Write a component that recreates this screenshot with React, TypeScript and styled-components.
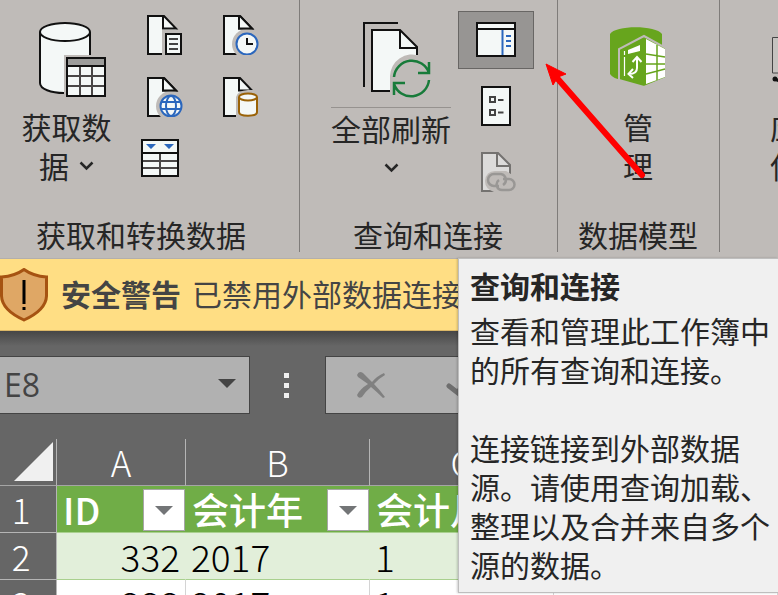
import React from "react";
import styled, { createGlobalStyle } from "styled-components";

const GlobalStyle = createGlobalStyle`
  *, *::before, *::after { box-sizing: border-box; }
  body {
    margin: 0;
    overflow: hidden;
    background: #666666;
    color: #262626;
    font-family: "Open Sans", "Noto Sans CJK SC", sans-serif;
    font-size: 30px;
  }
  button, input { font: inherit; color: inherit; }
  button { border: 0; padding: 0; background: none; cursor: pointer; }
  svg { display: block; flex: none; }
`;

const Page = styled.div`
  position: relative;
  display: flex;
  flex-direction: column;
  height: 100vh;
  overflow: hidden;
`;

/* ---------- Ribbon ---------- */

const Ribbon = styled.header`
  display: flex;
  flex: none;
  overflow: hidden;
  padding-bottom: 6px;
  background: #bfbbb8;
  border-bottom: 1px solid #b3afac;
  font-family: "Noto Sans CJK SC", sans-serif;
  font-weight: 400;
`;

const Group = styled.section<{ $width: number; $inset?: number }>`
  display: flex;
  flex: none;
  flex-direction: column;
  width: ${(p) => p.$width}px;
  padding-left: ${(p) => p.$inset ?? 0}px;
  border-right: 1px solid #7f7c7a;
`;

const GroupBody = styled.div`
  display: flex;
  align-items: flex-start;
  height: 216px;
`;

const GroupLabel = styled.h2<{ $indent: number }>`
  margin: 0;
  padding-left: ${(p) => p.$indent}px;
  font-size: 30px;
  font-weight: inherit;
  line-height: 36px;
  height: 36px;
  white-space: nowrap;
`;

const LargeButton = styled.button<{ $width: number }>`
  display: flex;
  flex: none;
  flex-direction: column;
  align-items: center;
  width: ${(p) => p.$width}px;
  padding-top: 20px;
  line-height: 39px;
`;

const LargeIcon = styled.span`
  display: flex;
  align-items: flex-start;
  height: 87px;
`;

const SplitIcon = styled(LargeIcon)`
  justify-content: center;
  width: 120px;
  height: 88px;
  border-bottom: 1px solid #96928f;
  margin-bottom: 1px;
`;

const Line = styled.span`
  display: flex;
  align-items: center;
  gap: 10px;
  height: 39px;
  white-space: nowrap;
`;

const SmallGrid = styled.div`
  display: grid;
  grid-template-columns: 76px 76px;
  grid-auto-rows: 62px;
  padding-top: 4px;
`;

const SmallStack = styled.div`
  display: flex;
  flex-direction: column;
  gap: 8px;
  padding-top: 11px;
`;

const IconButton = styled.button<{ $active?: boolean }>`
  display: flex;
  align-items: center;
  justify-content: center;
  width: 76px;
  height: 58px;
  background: ${(p) => (p.$active ? "#979593" : "transparent")};
  border: 1px solid ${(p) => (p.$active ? "#686664" : "transparent")};
`;

const GridButton = styled(IconButton)`
  height: 62px;
`;

/* ---------- Message bar ---------- */

const MessageBar = styled.div`
  display: flex;
  flex: none;
  align-items: center;
  height: 72px;
  background: #ffde84;
  border-bottom: 1px solid #dcb867;
  color: #444444;
  white-space: nowrap;
  overflow: hidden;
  line-height: 40px;
`;

const MessageTitle = styled.strong`
  margin-left: 13px;
  font-weight: 700;
`;

const MessageText = styled.span`
  margin-left: 11px;
`;

/* ---------- Formula row ---------- */

const FormulaRow = styled.div`
  display: flex;
  flex: none;
  align-items: center;
  height: 108px;
  background: linear-gradient(#464646, #666666 15px);
`;

const NameBox = styled.div`
  display: flex;
  align-items: center;
  width: 250px;
  height: 58px;
  background: #b1b1b1;
  border: 1px solid #444444;
  border-left: 0;
`;

const NameInput = styled.input`
  flex: 1;
  min-width: 0;
  height: 56px;
  padding: 0 0 2px 4px;
  border: 0;
  outline: 0;
  background: transparent;
  color: #444444;
  font-size: 32px;
`;

const DropButton = styled.button`
  display: flex;
  align-items: center;
  justify-content: center;
  width: 44px;
  height: 54px;
  padding-bottom: 3px;
`;

const Grip = styled.div`
  display: grid;
  justify-content: center;
  gap: 5px;
  width: 75px;
  padding-right: 2px;
`;

const Dot = styled.span`
  width: 5px;
  height: 5px;
  background: #f0f0f0;
`;

const FormulaBox = styled.div`
  display: flex;
  flex: 1;
  align-items: center;
  height: 58px;
  gap: 30px;
  padding-left: 15px;
  background: #b1b1b1;
  border: 1px solid #444444;
`;

const FormulaButton = styled.button`
  display: flex;
  align-items: center;
  justify-content: center;
  width: 60px;
  height: 56px;
`;

/* ---------- Sheet ---------- */

const Sheet = styled.table`
  flex: none;
  width: 100%;
  table-layout: fixed;
  border-collapse: separate;
  border-spacing: 0;
  background: #ffffff;
  color: #000000;
  font-family: "Noto Sans CJK SC", sans-serif;
  font-size: 37px;
  font-weight: 300;
  line-height: 46px;
`;

const Column = styled.col<{ $width?: number }>`
  width: ${(p) => (p.$width ? `${p.$width}px` : "auto")};
`;

const Head = styled.th`
  height: 47px;
  padding: 0;
  background: #666666;
  border-right: 1px solid #b5b5b5;
  border-bottom: 1px solid #a5a5a5;
  color: #ffffff;
  font-size: 35px;
  font-weight: 300;
  line-height: 46px;
`;

const Corner = styled(Head)`
  padding: 0 3px 2px 0;
`;

const CornerButton = styled.button`
  display: block;
  margin-left: auto;
`;

const RowHead = styled(Head)`
  padding: 0 14px 0 0;
  border-bottom-color: #b5b5b5;
`;

const TitleCell = styled.th`
  height: 47px;
  padding: 0 1px 0 6px;
  background: #70ad47;
  border-bottom: 1px solid #a9d08e;
  color: #ffffff;
  font-weight: 500;
  text-align: left;
`;

const TitleContent = styled.div`
  display: flex;
  align-items: center;
  justify-content: space-between;
  height: 46px;
  white-space: nowrap;
`;

const FilterButton = styled.button`
  display: flex;
  align-items: center;
  justify-content: center;
  width: 42px;
  height: 42px;
  margin-top: 2px;
  background: #ffffff;
  border: 1px solid #a6a6a6;
`;

const Cell = styled.td<{ $banded?: boolean; $right?: boolean }>`
  height: 47px;
  padding: 0 5px;
  background: ${(p) => (p.$banded ? "#e2efda" : "#ffffff")};
  border-right: 1px solid ${(p) => (p.$banded ? "#e2efda" : "#d4d4d4")};
  border-bottom: 1px solid #a9d08e;
  text-align: ${(p) => (p.$right ? "right" : "left")};
`;

/* ---------- Overlays ---------- */

const Tooltip = styled.aside`
  position: absolute;
  top: 258px;
  left: 458px;
  right: 0;
  padding: 7px 6px 8px 11px;
  background: #f0f0f0;
  border: 1px solid #bebebe;
  border-right: 0;
  box-shadow: -1px 0 2px rgba(0, 0, 0, 0.2);
  line-height: 39px;
  font-family: "Noto Sans CJK SC", sans-serif;
`;

const TooltipTitle = styled.h3`
  margin: 0 0 6px;
  font-size: 30px;
  font-weight: 700;
  line-height: 39px;
`;

const TooltipText = styled.p`
  margin: 0 0 39px;
  &:last-child { margin: 0; }
`;

const Pointer = styled.svg`
  position: absolute;
  top: 60px;
  left: 540px;
  pointer-events: none;
`;

/* ---------- Icons ---------- */

const INK = "#111111";
const PAPER = "#f4f8f7";
const RIBBON = "#bfbbb8";
const BLUE = "#2b67bd";

const Chevron = () => (
  <svg width="15" height="10" viewBox="0 0 15 10">
    <path d="M1.5 1.5 7.5 7.5 13.5 1.5" fill="none" stroke="#262626" strokeWidth="2.5" />
  </svg>
);

const Triangle = ({ color }: { color: string }) => (
  <svg width="18" height="9" viewBox="0 0 18 9">
    <path d="M0 0H18L9 9Z" fill={color} />
  </svg>
);

const GetDataIcon = () => (
  <svg width="80" height="78" viewBox="-10 0 80 78">
    <path d="M3 12V64C3 70 13 73 28 73H53V12" fill={PAPER} />
    <path d="M3 12V63C3 69 14 73 27 73M53 12V36" fill="none" stroke={INK} strokeWidth="2" />
    <ellipse cx="28" cy="12" rx="25" ry="9" fill={PAPER} stroke={INK} strokeWidth="2" />
    <path d="M27 35H70V78H27Z" fill={RIBBON} />
    <path d="M30 38H68V76H30Z" fill={PAPER} />
    <path d="M30 38H68V45H30Z" fill="#9c9c9a" />
    <path d="M43 46V76M55 46V76M30 56H68M30 66H68" stroke="#4a4747" strokeWidth="2" />
    <path d="M30 46H68M30 38H68V76H30Z" fill="none" stroke={INK} strokeWidth="2" />
  </svg>
);

const PageShape = () => (
  <>
    <path d="M1 1H17L29 14V39H1Z" fill={PAPER} />
    <path d="M15 39H1V1H17L29 13.500H16V1" fill="none" stroke={INK} strokeWidth="2" />
  </>
);

const TextFileIcon = () => (
  <svg width="36" height="40" viewBox="0 0 36 40">
    <PageShape />
    <path d="M15 15H36V40H15Z" fill={RIBBON} />
    <path d="M19 19H34V39H19Z" fill={PAPER} stroke={INK} strokeWidth="2" />
    <path d="M22 24H31M22 29H31M22 34H31" stroke="#444" strokeWidth="2" />
  </svg>
);

const RecentIcon = () => (
  <svg width="36" height="40" viewBox="0 0 36 40">
    <PageShape />
    <circle cx="24" cy="29" r="15" fill={RIBBON} />
    <path d="M17 1 29 13.500H16V1" fill={PAPER} stroke={INK} strokeWidth="2" />
    <circle cx="24" cy="29" r="10.500" fill={PAPER} stroke={BLUE} strokeWidth="2" />
    <path d="M24 23V29H30" fill="none" stroke={INK} strokeWidth="2" />
  </svg>
);

const WebIcon = () => (
  <svg width="36" height="40" viewBox="0 0 36 40">
    <PageShape />
    <circle cx="24" cy="29" r="15" fill={RIBBON} />
    <path d="M17 1 29 13.500H16V1" fill={PAPER} stroke={INK} strokeWidth="2" />
    <circle cx="24" cy="29" r="10.500" fill={PAPER} stroke={BLUE} strokeWidth="2" />
    <path d="M14 25H34M14 32H34" stroke={BLUE} strokeWidth="2" />
    <ellipse cx="24" cy="29" rx="5" ry="10" fill="none" stroke={BLUE} strokeWidth="2" />
  </svg>
);

const DatabaseFileIcon = () => (
  <svg width="36" height="40" viewBox="0 0 36 40">
    <PageShape />
    <path d="M13 40V20Q14 14 25 13H36V40Z" fill={RIBBON} />
    <path d="M16 20V35C16 40 34 40 34 35V20" fill={PAPER} stroke="#9a6207" strokeWidth="2" />
    <ellipse cx="25" cy="20" rx="9" ry="3.500" fill={PAPER} stroke="#9a6207" strokeWidth="2" />
  </svg>
);

const TableIcon = () => (
  <svg width="48" height="40" viewBox="0 0 48 40">
    <path d="M1 1H37V37H1Z" fill={PAPER} />
    <path d="M19 15V37M1 22H37M1 29H37" stroke="#4a4747" strokeWidth="2" />
    <path d="M1 1H37V37H1ZM1 14H37" fill="none" stroke={INK} strokeWidth="2" />
    <path d="M5 5H15L10 10ZM23 5H33L28 10Z" fill={BLUE} />
  </svg>
);

const RefreshAllIcon = () => (
  <svg width="82" height="78" viewBox="-10 0 82 78">
    <path d="M4 67V3H38" fill="none" stroke={INK} strokeWidth="2" />
    <path d="M12 11H40L57 27V70H12Z" fill={PAPER} />
    <path d="M30 71H12V10H40L57 27V35M40 10V28H57" fill="none" stroke={INK} strokeWidth="2" />
    <path d="M30 73V56A22 22 0 0 1 60 36H72V78H34Z" fill={RIBBON} />
    <path
      d="M34 57A18 18 0 0 1 69 53M69 42V53H58M69 60A18 18 0 0 1 34 64M45 63H34V75"
      fill="none"
      stroke="#187b3a"
      strokeWidth="2.500"
    />
  </svg>
);

const PaneIcon = () => (
  <svg width="40" height="36" viewBox="0 0 40 36">
    <path d="M1 1H39V34H1Z" fill={PAPER} />
    <path d="M26.500 7V33" stroke={BLUE} strokeWidth="2" />
    <path d="M30 14H35M30 19H35M30 24H35" stroke={BLUE} strokeWidth="2" />
    <path d="M1 1H39V34H1ZM1 7H39" fill="none" stroke={INK} strokeWidth="2" />
  </svg>
);

const PropertiesIcon = () => (
  <svg width="30" height="40" viewBox="0 0 30 40">
    <path d="M1 1H29V39H1Z" fill={PAPER} stroke={INK} strokeWidth="2" />
    <path
      d="M9 11H14V16H9ZM9 24H14V29H9ZM17 14H22.500M17 26.500H22.500"
      fill="none"
      stroke="#444"
      strokeWidth="2"
    />
  </svg>
);

const LinkIcon = () => (
  <svg width="42" height="40" viewBox="-6 0 42 40">
    <path d="M1 1H17L29 13V39H1Z" fill="#dcdbda" />
    <path d="M13 39H1V1H17L29 13V22M16 1V14H29" fill="none" stroke="#747270" strokeWidth="2" />
    <path d="M13 40Q4 37 4 29Q5 19 14 19H25Q31 22 36 28V40Z" fill={RIBBON} />
    <path
      d="M18 34H13A6 6 0 0 1 13 22H20A6 6 0 0 1 22 33M22 27H28A5.500 5.500 0 0 1 28 38H21A5.500 5.500 0 0 1 18 28"
      fill="none"
      stroke="#999795"
      strokeWidth="2.500"
    />
  </svg>
);

const PowerPivotIcon = () => (
  <svg width="58" height="68" viewBox="0 -6 58 68">
    <path d="M1 8C6-1 47-1 53 8V50L14 54Q4 53 1 48Z" fill="#67a51d" />
    <path d="M10 54V23L35 10 57 22V52L35 61Z" fill="#67a51d" stroke={RIBBON} strokeWidth="2" />
    <path d="M37 13 56 23V51L37 58Z" fill="#fff" />
    <path d="M48 19V54M37 28 56 31M37 38H56M37 48 56 43" stroke="#67a51d" strokeWidth="1.500" />
    <path d="M19 24 31 19V25L19 28Z" fill="#fff" />
    <path d="M15.500 25V29M15.500 31V50" stroke="#fff" strokeWidth="1.200" />
    <path
      d="M23.500 36 28 31 32.500 36M28 32V42Q28 48 20 48M24 43 19.500 48 24 52"
      fill="none"
      stroke="#fff"
      strokeWidth="2"
    />
  </svg>
);

const RelationIcon = () => (
  <svg width="30" height="64" viewBox="0 0 30 64">
    <path d="M2.500 17.500H42V53H2.500Z" fill="#c5c2bf" stroke="#444" />
    <circle cx="5" cy="59" r="2.500" fill={INK} />
    <path d="M5 59Q14 64 24 57" fill="none" stroke={INK} strokeWidth="3" />
  </svg>
);

const ShieldIcon = () => (
  <svg width="48" height="54" viewBox="0 0 48 54">
    <path
      d="M24 1.500Q33 8 46.500 9V28Q46 42 24 52Q2 42 1.500 28V9Q15 8 24 1.500Z"
      fill="#dfa765"
      stroke="#a65312"
      strokeWidth="3"
    />
    <path d="M24 12V36M24 39V42" stroke="#000" strokeWidth="3" />
  </svg>
);

const CancelIcon = () => (
  <svg width="30" height="28" viewBox="0 0 30 28">
    <path d="M1 4Q3-1 7 2L16 11Q21 5 28 2L29 4Q22 8 18 13Q23 18 29 26L27 27Q21 21 15 16Q10 20 6 26Q2 28 1 24Q4 18 12 13L2 6Z" fill="#808080" />
  </svg>
);

const AcceptIcon = () => (
  <svg width="30" height="28" viewBox="0 0 30 28">
    <path d="M3 15 12 22Q17 10 28 3" fill="none" stroke="#6e6e6e" strokeWidth="5" strokeLinecap="round" />
  </svg>
);

const columns = ["A", "B", "C"];
const titles = ["ID", "会计年", "会计月"];
const rows = [
  { n: 2, id: "332", year: "2017", month: "1" },
  { n: 3, id: "333", year: "2017", month: "1" },
];

export default function App() {
  return (
    <>
      <GlobalStyle />
      <Page>
        <Ribbon>
          <Group $width={300} $inset={6}>
            <GroupBody>
              <LargeButton $width={121}>
                <LargeIcon><GetDataIcon /></LargeIcon>
                <Line>获取数</Line>
                <Line>据 <Chevron /></Line>
              </LargeButton>
              <SmallGrid>
                <GridButton aria-label="从文本/CSV"><TextFileIcon /></GridButton>
                <GridButton aria-label="最近使用的源"><RecentIcon /></GridButton>
                <GridButton aria-label="自网站"><WebIcon /></GridButton>
                <GridButton aria-label="现有连接"><DatabaseFileIcon /></GridButton>
                <GridButton aria-label="自表格/区域"><TableIcon /></GridButton>
              </SmallGrid>
            </GroupBody>
            <GroupLabel $indent={30}>获取和转换数据</GroupLabel>
          </Group>

          <Group $width={258} $inset={24}>
            <GroupBody>
              <LargeButton $width={134}>
                <SplitIcon><RefreshAllIcon /></SplitIcon>
                <Line>全部刷新</Line>
                <Line><Chevron /></Line>
              </LargeButton>
              <SmallStack>
                <IconButton $active aria-label="查询和连接"><PaneIcon /></IconButton>
                <IconButton aria-label="属性"><PropertiesIcon /></IconButton>
                <IconButton aria-label="编辑链接" disabled><LinkIcon /></IconButton>
              </SmallStack>
            </GroupBody>
            <GroupLabel $indent={29}>查询和连接</GroupLabel>
          </Group>

          <Group $width={162} $inset={20}>
            <GroupBody>
              <LargeButton $width={120}>
                <LargeIcon><PowerPivotIcon /></LargeIcon>
                <Line>管</Line>
                <Line>理</Line>
              </LargeButton>
            </GroupBody>
            <GroupLabel $indent={0}>数据模型</GroupLabel>
          </Group>

          <Group $width={162} $inset={50}>
            <GroupBody>
              <LargeButton $width={30}>
                <LargeIcon><RelationIcon /></LargeIcon>
                <Line>应</Line>
                <Line>使</Line>
              </LargeButton>
            </GroupBody>
          </Group>
        </Ribbon>

        <MessageBar role="alert">
          <ShieldIcon />
          <MessageTitle>安全警告</MessageTitle>
          <MessageText>已禁用外部数据连接</MessageText>
        </MessageBar>

        <FormulaRow>
          <NameBox>
            <NameInput aria-label="名称框" defaultValue="E8" />
            <DropButton aria-label="名称列表"><Triangle color="#444444" /></DropButton>
          </NameBox>
          <Grip><Dot /><Dot /><Dot /></Grip>
          <FormulaBox>
            <FormulaButton aria-label="取消"><CancelIcon /></FormulaButton>
            <FormulaButton aria-label="输入"><AcceptIcon /></FormulaButton>
          </FormulaBox>
        </FormulaRow>

        <Sheet>
          <colgroup>
            <Column $width={57} />
            <Column $width={129} />
            <Column $width={184} />
            <Column $width={184} />
            <Column />
          </colgroup>
          <thead>
            <tr>
              <Corner>
                <CornerButton aria-label="全选">
                  <svg width="39" height="39" viewBox="0 0 39 39">
                    <path d="M39 0V39H0Z" fill="#f0f0f0" />
                  </svg>
                </CornerButton>
              </Corner>
              {columns.map((c) => <Head key={c} scope="col">{c}</Head>)}
              <Head />
            </tr>
          </thead>
          <tbody>
            <tr>
              <RowHead scope="row">1</RowHead>
              {titles.map((t) => (
                <TitleCell key={t} scope="col">
                  <TitleContent>
                    {t}
                    <FilterButton aria-label={`筛选 ${t}`}><Triangle color="#737577" /></FilterButton>
                  </TitleContent>
                </TitleCell>
              ))}
              <TitleCell />
            </tr>
            {rows.map((r) => (
              <tr key={r.n}>
                <RowHead scope="row">{r.n}</RowHead>
                <Cell $banded={r.n === 2} $right>{r.id}</Cell>
                <Cell $banded={r.n === 2}>{r.year}</Cell>
                <Cell $banded={r.n === 2}>{r.month}</Cell>
                <Cell $banded={r.n === 2} />
              </tr>
            ))}
          </tbody>
        </Sheet>

        <Tooltip role="tooltip">
          <TooltipTitle>查询和连接</TooltipTitle>
          <TooltipText>查看和管理此工作簿中的所有查询和连接。</TooltipText>
          <TooltipText>连接链接到外部数据源。请使用查询加载、整理以及合并来自多个源的数据。</TooltipText>
        </Tooltip>

        <Pointer width="110" height="124" viewBox="0 0 110 124" aria-hidden="true">
          <path d="M17 18 102 115" stroke="#ff0000" strokeWidth="6" strokeLinecap="round" />
          <path d="M6 4 26 14 18 17 13 25Z" fill="#ff0000" stroke="#ff0000" />
        </Pointer>
      </Page>
    </>
  );
}
